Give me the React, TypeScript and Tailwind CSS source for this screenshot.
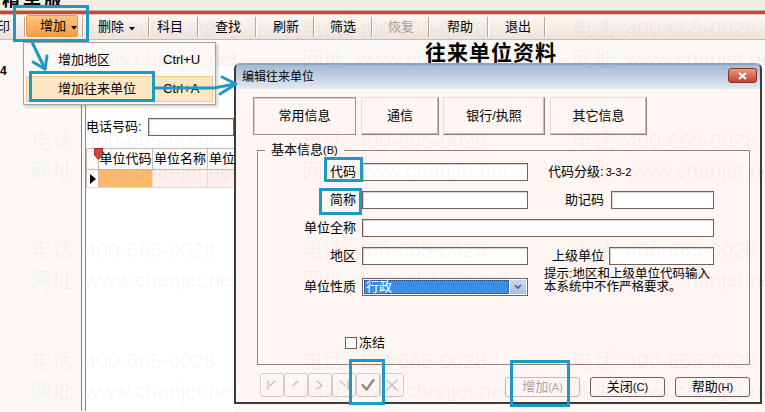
import React from "react";

const FONT = "font-[family-name:'Liberation_Sans','Noto_Sans_CJK_SC',sans-serif]";
const INPUT = "h-[18px] bg-white border border-[#7a5f56] shadow-[inset_1px_1px_0_#ddd0ca]";

function Sep() {
  return (
    <div className="flex h-[20px] w-[2px]">
      <div className="h-full w-px bg-[#b9a69b]" />
      <div className="h-full w-px bg-white" />
    </div>
  );
}

function Caret() {
  return (
    <svg width="6" height="4" viewBox="0 0 6 4" className="ml-[5px] mt-[3px]">
      <path d="M0 0 L6 0 L3 3.5 Z" fill="#000" />
    </svg>
  );
}

function NavBtn({ children }: { children: React.ReactNode }) {
  return (
    <div className="flex h-[24px] w-[24px] items-center justify-center rounded-[3px] border border-[#d4cbc7] shadow-[inset_1px_1px_0_#ffffff]">
      <svg width="20" height="20" viewBox="0 0 20 20" fill="none" strokeLinecap="round" strokeLinejoin="round">
        {children}
      </svg>
    </div>
  );
}

const WM: Array<[number, number]> = [
  [31, 16], [302, 16], [572, 16],
  [31, 128], [302, 128], [572, 128],
  [31, 237], [302, 237], [572, 237],
  [31, 348], [302, 348], [572, 348],
];

export default function App() {
  return (
    <div className={`relative h-[412px] w-[765px] overflow-hidden bg-[#fbf8f5] text-[13px] leading-[16px] text-black ${FONT}`}>
      {/* title strip */}
      <div className="flex h-[10px] items-end overflow-hidden bg-[#f3ede8]">
        <span className="mb-[1px] ml-[2px] text-[18px] font-bold leading-[18px] tracking-[3px]">精单版</span>
      </div>
      <div className="h-px bg-[#dca79c]" />
      <div className="h-[3px] bg-[#c24a3a]" />
      <div className="h-px bg-[#e6c0b5]" />

      {/* toolbar */}
      <div className="flex h-[25px] items-center border-b border-[#cdb9ad] bg-gradient-to-b from-[#fbf7f3] to-[#eee4dd]">
        <div className="flex h-full w-[24px] items-center overflow-hidden">
          <span className="-ml-[16px] whitespace-nowrap">打印</span>
        </div>
        <Sep />
        <div className="flex h-full w-[56px] items-start">
          <div className="flex h-[22px] w-[52px] items-center rounded-[2px] border border-[#e89a48] bg-gradient-to-b from-[#fcc47e] to-[#f59f45] pl-[13px]">
            <span>增加</span>
            <Caret />
          </div>
        </div>
        <Sep />
        <div className="flex h-full w-[64px] items-center pl-[14px]">
          <span>删除</span>
          <Caret />
        </div>
        <Sep />
        <div className="flex h-full w-[47px] items-center pl-[7px]">科目</div>
        <Sep />
        <div className="flex h-full w-[56px] items-center pl-[16px]">查找</div>
        <Sep />
        <div className="flex h-full w-[56px] items-center pl-[16px]">刷新</div>
        <Sep />
        <div className="flex h-full w-[56px] items-center pl-[15px]">筛选</div>
        <Sep />
        <div className="flex h-full w-[55px] items-center pl-[15px] text-[#a9a19c]">恢复</div>
        <Sep />
        <div className="flex h-full w-[57px] items-center pl-[17px]">帮助</div>
        <Sep />
        <div className="flex h-full w-[55px] items-center pl-[16px]">退出</div>
        <Sep />
      </div>

      {/* underlying window */}
      <div className="flex flex-col">
        <div className="h-[26px] pl-[425px] pt-[1px] text-[21px] font-bold leading-[24px] tracking-[1px]">往来单位资料</div>
        <div className="flex h-[345px]">
          <div className="w-[81px]">
            <span className="block text-[12px] font-bold leading-[10px]">4</span>
          </div>
          <div className="w-[153px] border-l border-[#b8695b] pl-[3px]">
            <div className="h-full border-l border-[#a48176] bg-white pt-[52px]">
              <div className="flex h-[18px] items-center">
                <span className="w-[62px] whitespace-nowrap">电话号码:</span>
                <div className={`flex-1 ${INPUT}`} />
              </div>
              <div className="relative mt-[12px] border-l border-t border-[#c7bab3]">
                <div className="flex h-[21px] border-b border-[#c7bab3] bg-[#fdfaf8]">
                  <div className="w-[12px] border-r border-[#c7bab3]" />
                  <div className="flex w-[54px] items-center justify-center border-r border-[#c7bab3] whitespace-nowrap">单位代码</div>
                  <div className="flex w-[55px] items-center justify-center border-r border-[#c7bab3] whitespace-nowrap">单位名称</div>
                  <div className="flex flex-1 items-center overflow-hidden pl-[1px] whitespace-nowrap">单位</div>
                </div>
                <div className="flex h-[18px] border-b border-[#e6dad4]">
                  <div className="flex w-[12px] items-center justify-center border-r border-[#c7bab3]">
                    <svg width="6" height="10" viewBox="0 0 6 10"><path d="M0 0 L6 5 L0 10 Z" fill="#000" /></svg>
                  </div>
                  <div className="w-[54px] border-r border-[#e6dad4] bg-[#fdb96b]" />
                  <div className="w-[55px] border-r border-[#e6dad4] bg-[#fdf0ea]" />
                  <div className="flex-1 bg-[#fdf0ea]" />
                </div>
                <svg className="absolute left-[7px] top-[-1px]" width="9" height="12" viewBox="0 0 9 12">
                  <path d="M0.5 0.5 H8.5 V7 L4.5 11.5 L0.5 7 Z" fill="#d2443b" stroke="#9b2c25" />
                </svg>
              </div>
            </div>
          </div>
        </div>
      </div>

      {/* dropdown menu */}
      <div className="absolute left-[23px] top-[42px] h-[63px] w-[193px] border border-[#a99f98] bg-[#fbf8f5] shadow-[2px_2px_3px_rgba(0,0,0,0.18)]">
        <div className="flex h-[33px] items-center pl-[34px]">
          <span className="w-[105px]">增加地区</span>
          <span>Ctrl+U</span>
        </div>
        <div className="mx-[2px] flex h-[26px] items-center border border-[#efc98c] bg-[#fde7c3] pl-[31px]">
          <span className="w-[105px]">增加往来单位</span>
          <span>Ctrl+A</span>
        </div>
      </div>

      {/* dialog */}
      <div className="absolute left-[234px] top-[63px] flex h-[341px] w-[528px] flex-col rounded-t-[6px] border-2 border-[#3c3c3c] border-t-[#8ea4bf] bg-[#fdf6f3]">
        <div className="flex h-[24px] items-start justify-between rounded-t-[4px] bg-gradient-to-b from-[#a3b9d4] to-[#e3eaf2] pl-[6px] pr-[3px]">
          <span className="mt-[4px] text-[12px] leading-[16px]">编辑往来单位</span>
          <div className="mt-[3px] flex h-[15px] w-[29px] items-center justify-center rounded-[3px] border border-[#8e2f24] bg-gradient-to-b from-[#e9998a] to-[#bf412f]">
            <svg width="9" height="8" viewBox="0 0 9 8"><path d="M1 1 L8 7 M8 1 L1 7" stroke="#fff" strokeWidth="2" /></svg>
          </div>
        </div>

        {/* tabs */}
        <div className="mt-[8px] flex h-[38px] pl-[17px]">
          <div className="flex w-[103px] items-center justify-center border border-[#9c918c] bg-[#fdf6f3] shadow-[inset_1px_1px_0_#d9cfca]">常用信息</div>
          <div className="ml-[5px] flex w-[78px] items-center justify-center border border-[#e6deda] border-b-[#8b817d] border-r-[#8b817d] bg-[#fdf6f3] shadow-[inset_-1px_-1px_0_#c8bfbb]">通信</div>
          <div className="ml-[4px] flex w-[102px] items-center justify-center border border-[#e6deda] border-b-[#8b817d] border-r-[#8b817d] bg-[#fdf6f3] shadow-[inset_-1px_-1px_0_#c8bfbb]">银行/执照</div>
          <div className="ml-[5px] flex w-[97px] items-center justify-center border border-[#e6deda] border-b-[#8b817d] border-r-[#8b817d] bg-[#fdf6f3] shadow-[inset_-1px_-1px_0_#c8bfbb]">其它信息</div>
        </div>

        {/* group */}
        <fieldset className="ml-[21px] mt-[7px] h-[223px] w-[493px] border border-[#9b7f76]">
          <legend className="ml-[7px] px-[6px] leading-[16px]">
            基本信息<span className="text-[11px]">(B)</span>
          </legend>
          <div className="mt-[5px] flex h-[18px] items-center">
            <span className="w-[98px] text-right">代码</span>
            <div className={`ml-[6px] w-[166px] ${INPUT}`} />
            <span className="ml-[20px] whitespace-nowrap">代码分级:<span className="ml-[2px] text-[11px]">3-3-2</span></span>
          </div>
          <div className="mt-[10px] flex h-[18px] items-center">
            <span className="w-[98px] text-right">简称</span>
            <div className={`ml-[6px] w-[166px] ${INPUT}`} />
            <span className="w-[76px] text-right">助记码</span>
            <div className={`ml-[7px] w-[103px] ${INPUT}`} />
          </div>
          <div className="mt-[10px] flex h-[18px] items-center">
            <span className="w-[98px] text-right">单位全称</span>
            <div className={`ml-[6px] w-[352px] ${INPUT}`} />
          </div>
          <div className="mt-[10px] flex h-[18px] items-center">
            <span className="w-[98px] text-right">地区</span>
            <div className={`ml-[6px] w-[166px] ${INPUT}`} />
            <span className="w-[76px] text-right">上级单位</span>
            <div className={`ml-[5px] w-[105px] ${INPUT}`} />
          </div>
          <div className="mt-[13px] flex h-[18px] items-start">
            <span className="w-[98px] self-center text-right">单位性质</span>
            <div className="ml-[6px] flex h-[18px] w-[166px] border border-[#7a5f56] bg-white p-[1px]">
              <div className="flex flex-1 items-center border border-dotted border-[#1b3d6e] bg-[#3b8fe6] pl-[1px] text-white">行政</div>
              <div className="ml-[1px] flex w-[16px] items-center justify-center bg-gradient-to-b from-[#c9d8ef] to-[#a7bfe2]">
                <svg width="8" height="6" viewBox="0 0 8 6"><path d="M1 1 L4 4 L7 1" stroke="#3d5f95" strokeWidth="1.6" fill="none" /></svg>
              </div>
            </div>
            <div className="-mt-[10px] ml-[16px] text-[12.5px] leading-[13px]">
              <div>提示:地区和上级单位代码输入</div>
              <div>本系统中不作严格要求。</div>
            </div>
          </div>
          <div className="ml-[87px] mt-[40px] flex h-[14px] items-center">
            <div className="h-[12px] w-[12px] border border-[#6f5a52] bg-white" />
            <span className="ml-[2px]">冻结</span>
          </div>
        </fieldset>

        {/* bottom buttons */}
        <div className="ml-[24px] mt-[8px] flex items-start">
          <NavBtn>
            <path d="M6 6 V14 M13 6 L8 10.5" stroke="#c8bdb8" strokeWidth="1.3" />
          </NavBtn>
          <NavBtn>
            <path d="M12 6 L7 10.5" stroke="#c8bdb8" strokeWidth="1.3" />
          </NavBtn>
          <NavBtn>
            <path d="M7 6 L12 10.5 L7 14" stroke="#c8bdb8" strokeWidth="1.3" />
          </NavBtn>
          <NavBtn>
            <path d="M6 6 L11 10.5 M14 6 V14" stroke="#c8bdb8" strokeWidth="1.3" />
          </NavBtn>
          <NavBtn>
            <path d="M4.5 10 L8.5 14.5 L15.5 5" stroke="#8c8784" strokeWidth="2.4" />
          </NavBtn>
          <NavBtn>
            <path d="M5 5 L15 15 M15 5 L5 15" stroke="#c8bdb8" strokeWidth="1.3" />
          </NavBtn>
          <div className="ml-[101px] mt-[4px] flex gap-[10px]">
            <div className="flex h-[20px] w-[75px] items-center justify-center rounded-[3px] border border-[#c4bab6] text-[#a9a19d] [text-shadow:1px_1px_0_#ffffff]">
              增加<span className="text-[11px]">(A)</span>
            </div>
            <div className="flex h-[20px] w-[75px] items-center justify-center rounded-[3px] border border-[#6f5f58]">
              关闭<span className="text-[11px]">(C)</span>
            </div>
            <div className="flex h-[20px] w-[75px] items-center justify-center rounded-[3px] border border-[#6f5f58]">
              帮助<span className="text-[11px]">(H)</span>
            </div>
          </div>
        </div>
      </div>

      {/* watermark */}
      {WM.map(([x, y], i) => (
        <div
          key={i}
          className="pointer-events-none absolute whitespace-nowrap text-[21px] leading-[26px] text-black/[0.05]"
          style={{ left: x, top: y }}
        >
          <div>电话: 400-665-0028</div>
          <div className="mt-[4px]">网址: www.chanjet.net</div>
        </div>
      ))}

      {/* annotation boxes */}
      <div className="pointer-events-none absolute left-[13px] top-[5px] h-[37px] w-[76px] border-[3px] border-[#1b9ac6]" />
      <div className="pointer-events-none absolute left-[29px] top-[71px] h-[31px] w-[126px] border-[3px] border-[#1b9ac6]" />
      <div className="pointer-events-none absolute left-[324px] top-[157px] h-[25px] w-[39px] border-[3px] border-[#1b9ac6]" />
      <div className="pointer-events-none absolute left-[319px] top-[188px] h-[27px] w-[43px] border-[3px] border-[#1b9ac6]" />
      <div className="pointer-events-none absolute left-[349px] top-[359px] h-[46px] w-[36px] border-[3px] border-[#1b9ac6]" />
      <div className="pointer-events-none absolute left-[510px] top-[360px] h-[47px] w-[60px] border-[3px] border-[#1b9ac6]" />

      {/* arrows */}
      <svg className="pointer-events-none absolute left-0 top-0" width="765" height="412" viewBox="0 0 765 412" fill="none">
        <g stroke="#1b9ac6" strokeWidth="3" strokeLinecap="round" strokeLinejoin="round">
          <path d="M32 42 L45 69" />
          <path d="M33 62 L45 69 L47 56" />
          <path d="M155 88 L214 88 L235 84" />
          <path d="M222 77 L236 84 L220 94" />
        </g>
      </svg>
    </div>
  );
}
